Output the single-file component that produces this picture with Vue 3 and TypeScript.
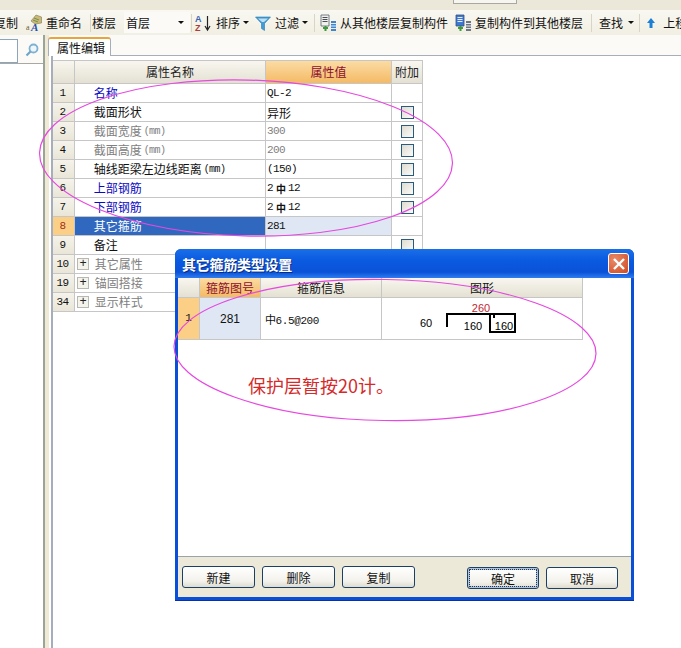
<template>
  <div class="page">
    <div class="topstrip"><span class="stub"></span></div>

    <div class="toolbar">
      <span class="tool cut">复制</span>
      <svg class="ico m8" width="16" height="18" viewBox="0 0 16 18">
        <path d="M5 7 L10 1 L15.5 3 L15.5 9 L9 10 Z" fill="#cdb877" stroke="#7d7a50" stroke-width=".6" />
        <path d="M8 4 L13 6 M7 6 L12 8" stroke="#6f8f52" />
        <text x="0" y="16" class="ico-a">a</text>
        <text x="5" y="17" class="ico-b">A</text>
      </svg>
      <span class="tool m4">重命名</span>
      <i class="sep m8"></i>
      <span class="tool m1">楼层</span>
      <span class="floor m8"><span>首层</span><b class="caret"></b></span>
      <i class="sep m1"></i>
      <svg class="ico m3" width="17" height="18" viewBox="0 0 17 18">
        <text x="0" y="8" class="az az-a">A</text>
        <text x="0" y="17" class="az az-z">Z</text>
        <path d="M12.5 2 V15 M10 12 L12.5 16 L15 12" stroke="#222" stroke-width="1.2" fill="none" />
      </svg>
      <span class="tool m4">排序</span>
      <b class="caret m3"></b>
      <svg class="ico m6" width="16" height="16" viewBox="0 0 16 16">
        <path d="M0.5 2 H15.5 L9.5 8.5 V15.5 L6.5 13.5 V8.5 Z" fill="#3f9cd8" stroke="#2a78ac" stroke-width=".6" />
        <path d="M3 3.5 H13 L9 7 H7 Z" fill="#bfe0f4" />
      </svg>
      <span class="tool m4">过滤</span>
      <b class="caret m3"></b>
      <i class="sep m6"></i>
      <svg class="ico m5" width="17" height="18" viewBox="0 0 17 18">
        <path d="M1 1 H9 V12 H1 Z" fill="#f2f2ec" stroke="#55606c" stroke-width=".8" />
        <path d="M2.5 3.5 H7.5 M2.5 5.5 H7.5 M2.5 7.5 H7.5" stroke="#4a5058" />
        <path d="M3 14 H8 M5.5 12 V17" stroke="#3f9a3f" stroke-width="2" />
        <path d="M11 7 H16 V17 H11 Z" fill="#3f86c8" />
        <path d="M11 9.5 H16 M11 12 H16 M11 14.5 H16" stroke="#e7edf6" />
      </svg>
      <span class="tool m3">从其他楼层复制构件</span>
      <svg class="ico m7" width="17" height="18" viewBox="0 0 17 18">
        <path d="M1 1 H9 V12 H1 Z" fill="#3f78d0" stroke="#34507f" stroke-width=".8" />
        <path d="M2.5 3.5 H7.5 M2.5 5.5 H7.5 M2.5 7.5 H7.5" stroke="#e7edf6" />
        <path d="M3 14 H8 M5.5 12 V17" stroke="#3f9a3f" stroke-width="2" />
        <path d="M11 7 H16 V17 H11 Z" fill="#70767e" />
        <path d="M11 9.5 H16 M11 12 H16 M11 14.5 H16" stroke="#e7edf6" />
      </svg>
      <span class="tool m3">复制构件到其他楼层</span>
      <i class="sep m8"></i>
      <span class="tool m7">查找</span>
      <b class="caret m5"></b>
      <i class="sep m5"></i>
      <svg class="ico m7" width="8" height="10" viewBox="0 0 8 10">
        <path d="M4 0 L8 5 H5.5 V10 H2.5 V5 H0 Z" fill="#1c7fd6" />
      </svg>
      <span class="tool m8">上移</span>
    </div>

    <div class="main">
      <aside class="side">
        <div class="search">
          <span class="search-input"></span>
          <svg class="search-ico" width="14" height="14" viewBox="0 0 14 14">
            <circle cx="8.5" cy="5.5" r="4" fill="#eef6fb" stroke="#7fb1d2" stroke-width="1.8" />
            <path d="M5.5 8.5 L1.5 12.5" stroke="#6ea4c8" stroke-width="2.2" />
          </svg>
        </div>
      </aside>
      <div class="splitter"></div>

      <section class="content">
        <div class="tabs"><span class="tab">属性编辑</span></div>
        <div class="panel">
          <div class="grid">
            <div class="hd"></div>
            <div class="hd">属性名称</div>
            <div class="hd hd-on">属性值</div>
            <div class="hd">附加</div>

            <template v-for="row in rows" :key="row.no">
              <div :class="['no', { 'no-on': row.active }]">{{ row.no }}</div>
              <div :class="['name', row.tone, { 'name-on': row.active, 'name-wide': row.group }]">
                <span v-if="row.group" class="plus">+</span>
                {{ row.name }}<small v-if="row.unit">(mm)</small>
              </div>
              <template v-if="!row.group">
                <div :class="['val', { 'val-on': row.active, 'val-gray': row.tone === 'gray', 'val-cn': row.cn }]">
                  <template v-if="row.bar"><span class="rebar">2</span><b class="bar">中</b><span class="rebar">12</span></template>
                  <template v-else>{{ row.value }}</template>
                </div>
                <div class="add"><span v-if="row.check" class="check"></span></div>
              </template>
            </template>
          </div>
          <svg class="ring" width="430" height="175" viewBox="0 0 430 175">
            <ellipse cx="208" cy="86" rx="206.5" ry="78" transform="rotate(1.5 208 86)" />
          </svg>
        </div>
      </section>
    </div>

    <div class="dialog">
      <div class="title">
        <span>其它箍筋类型设置</span>
        <span class="close">
          <svg width="14" height="14" viewBox="0 0 14 14">
            <path d="M2 2 L12 12 M12 2 L2 12" stroke="#fff" stroke-width="2.4" />
          </svg>
        </span>
      </div>
      <div class="client">
        <div class="list">
          <div class="lh"></div>
          <div class="lh lh-on">箍筋图号</div>
          <div class="lh">箍筋信息</div>
          <div class="lh">图形</div>
          <div class="ln">1</div>
          <div class="lc lc-on">281</div>
          <div class="lc lc-info">中6.5@200</div>
          <div class="lc lc-shape">
            <svg width="200" height="40" viewBox="0 0 200 40">
              <text x="99" y="13" class="dim dim-red">260</text>
              <text x="44" y="28" class="dim">60</text>
              <text x="91" y="31" class="dim">160</text>
              <text x="122" y="31" class="dim">160</text>
              <path d="M65 28 V15 H108 M108 15 H133 V33 H108 Z M112 15 V19" fill="none" stroke="#000" stroke-width="2" />
            </svg>
          </div>
        </div>
        <p class="note">保护层暂按20计。</p>
      </div>
      <div class="foot">
        <button class="btn">新建</button>
        <button class="btn">删除</button>
        <button class="btn">复制</button>
        <button class="btn btn-ok">确定</button>
        <button class="btn btn-cancel">取消</button>
      </div>
    </div>

    <svg class="ring ring-top" width="430" height="150" viewBox="0 0 430 150">
      <ellipse cx="213" cy="73" rx="211" ry="70.5" transform="rotate(1 213 73)" />
    </svg>
  </div>
</template>

<script setup lang="ts">
interface Row {
  no: number;
  name: string;
  value?: string;
  tone?: "blue" | "gray";
  unit?: boolean;
  check?: boolean;
  active?: boolean;
  group?: boolean;
  bar?: boolean;
  cn?: boolean;
}

const rows: Row[] = [
  { no: 1, name: "名称", value: "QL-2", tone: "blue" },
  { no: 2, name: "截面形状", value: "异形", check: true, cn: true },
  { no: 3, name: "截面宽度", value: "300", tone: "gray", unit: true, check: true },
  { no: 4, name: "截面高度", value: "200", tone: "gray", unit: true, check: true },
  { no: 5, name: "轴线距梁左边线距离", value: "(150)", unit: true, check: true },
  { no: 6, name: "上部钢筋", tone: "blue", bar: true, check: true },
  { no: 7, name: "下部钢筋", tone: "blue", bar: true, check: true },
  { no: 8, name: "其它箍筋", value: "281", active: true },
  { no: 9, name: "备注", value: "", check: true },
  { no: 10, name: "其它属性", tone: "gray", group: true },
  { no: 19, name: "锚固搭接", tone: "gray", group: true },
  { no: 34, name: "显示样式", tone: "gray", group: true },
];
</script>

<style>
html,
body {
  margin: 0;
  background: #fff;
}
</style>

<style scoped>
.page {
  position: relative;
  width: 681px;
  height: 648px;
  overflow: hidden;
  display: flex;
  flex-direction: column;
  background: #fff;
  color: #111;
  font: 12px/1 "Noto Sans CJK SC", "Liberation Sans", sans-serif;
}

.topstrip {
  height: 10px;
  background: #ebe8da;
  flex: none;
}

.stub {
  display: block;
  width: 62px;
  height: 3px;
  margin-left: 453px;
  border: 1px solid #a8a8a0;
  border-top: none;
  background: #f6f5ef;
}

.toolbar {
  height: 25px;
  flex: none;
  display: flex;
  align-items: center;
  white-space: nowrap;
  background: linear-gradient(#f9f8f1, #f1efe3);
}

.tool {
  flex: none;
}

.cut {
  margin-left: -6px;
}

.ico {
  flex: none;
  overflow: visible;
}

.ico-a {
  font: 8px "Liberation Serif", serif;
  fill: #6a5a30;
}

.ico-b {
  font: italic bold 11px "Liberation Serif", serif;
  fill: #2a4fa8;
}

.az {
  font: bold 9px "Liberation Sans", sans-serif;
}

.az-a {
  fill: #3a62b0;
}

.az-z {
  fill: #a8403a;
}

.m1 { margin-left: 1px; }
.m3 { margin-left: 3px; }
.m4 { margin-left: 4px; }
.m5 { margin-left: 5px; }
.m6 { margin-left: 6px; }
.m7 { margin-left: 7px; }
.m8 { margin-left: 8px; }

.sep {
  flex: none;
  width: 1px;
  height: 18px;
  background: #d8d5c6;
}

.caret {
  flex: none;
  width: 0;
  height: 0;
  border: 3px solid transparent;
  border-top: 3px solid #111;
  border-bottom: none;
}

.floor {
  flex: none;
  width: 66px;
  height: 21px;
  box-sizing: border-box;
  padding: 0 6px 0 2px;
  display: flex;
  align-items: center;
  justify-content: space-between;
  background: #fbfaf6;
}

.main {
  flex: 1;
  min-height: 0;
  display: flex;
}

.side {
  width: 43px;
  flex: none;
  background: #fff;
}

.search {
  height: 29px;
  box-sizing: border-box;
  display: flex;
  padding-top: 4px;
  border-bottom: 1px solid #a9a9a4;
  background: #fbfaf6;
}

.search-input {
  width: 18px;
  height: 24px;
  box-sizing: border-box;
  background: #fff;
  border: 1px solid #8ea4bc;
  border-left: none;
}

.search-ico {
  margin: 4px 0 0 7px;
}

.splitter {
  width: 6px;
  flex: none;
  box-sizing: border-box;
  background: #efe9d5;
  border-left: 2px solid #9aa59a;
}

.content {
  flex: 1;
  min-width: 0;
  display: flex;
  flex-direction: column;
}

.tabs {
  height: 20px;
  flex: none;
  display: flex;
  align-items: flex-end;
  background: #fbfaf6;
  border-bottom: 1px solid #a6aebb;
}

.tab {
  position: relative;
  top: 1px;
  width: 63px;
  height: 19px;
  box-sizing: border-box;
  margin-left: -1px;
  padding: 3px 0 0 8px;
  background: #fff;
  border: 1px solid #a6aebb;
  border-top: 2px solid #e8a53c;
  border-bottom: none;
  border-radius: 3px 3px 0 0;
}

.panel {
  position: relative;
  flex: 1;
  margin-left: 2px;
  padding: 4px 0 0 0;
  border-left: 2px solid #a6aebb;
}

.grid {
  display: grid;
  width: 370px;
  grid-template-columns: 22px 191px 126px 31px;
  grid-template-rows: 23px repeat(12, 19px);
  border-top: 1px solid #c6c6c6;
}

.grid > div {
  box-sizing: border-box;
  display: flex;
  align-items: center;
  border-right: 1px solid #c6c6c6;
  border-bottom: 1px solid #c6c6c6;
}

.hd {
  justify-content: center;
  background: linear-gradient(#f8f6ef, #e4e1d3);
  color: #222;
}

.hd-on {
  background: linear-gradient(#fbdca4, #f4ba65);
  color: #8c0f2e;
}

.no {
  justify-content: center;
  padding-right: 2px;
  background: linear-gradient(#f5f3ea, #e9e6d8);
  font-family: "Liberation Mono", monospace;
  font-size: 11px;
  letter-spacing: -0.6px;
}

.no-on {
  background: #fbcf85;
  color: #a2301c;
}

.name {
  padding-left: 16px;
  white-space: pre;
}

.name small {
  margin-left: 2px;
  font: 10px "Liberation Mono", monospace;
  letter-spacing: -0.6px;
}

.name-on {
  background: #3168bf;
  color: #fff;
}

.name-wide {
  grid-column: span 3;
  padding-left: 2px;
}

.blue {
  color: #0a0ac4;
}

.gray {
  color: #808080;
}

.plus {
  width: 12px;
  height: 12px;
  box-sizing: border-box;
  margin-right: 3px;
  display: flex;
  align-items: center;
  justify-content: center;
  background: #f4f3ec;
  border: 1px solid #b8b8b0;
  color: #222;
  font: 12px/1 "Liberation Mono", monospace;
}

.val {
  padding-left: 1px;
  font: 11px "Liberation Mono", monospace;
  letter-spacing: -0.6px;
}

.val-cn {
  font: 12px "Noto Sans CJK SC", sans-serif;
  letter-spacing: 0;
}

.val-gray {
  color: #808080;
}

.val-on {
  background: #dfe7f4;
}

.rebar {
  font-size: 11px;
}

.bar {
  margin: 0 2px 0 3px;
  font: bold 10px "Noto Sans CJK SC", sans-serif;
  letter-spacing: 0;
}

.add {
  justify-content: center;
}

.check {
  width: 13px;
  height: 13px;
  box-sizing: border-box;
  border: 1px solid #2a5a7c;
  background: linear-gradient(135deg, #dedbd0, #fbfbf8);
}

.ring {
  position: absolute;
  overflow: visible;
  top: 16px;
  left: -15px;
  pointer-events: none;
}

.ring ellipse {
  fill: none;
  stroke: #e648e0;
  stroke-width: 1.2;
}

.ring-top {
  top: 277px;
  left: 172px;
}

.dialog {
  position: absolute;
  top: 249px;
  left: 175px;
  width: 459px;
  height: 352px;
  box-sizing: border-box;
  display: flex;
  flex-direction: column;
  padding: 0 3px 3px;
  background: #0a4fd8;
  border-radius: 6px 6px 0 0;
  border-bottom: 1px solid #0831a8;
}

.title {
  height: 29px;
  flex: none;
  margin: 0 -3px;
  padding: 0 5px 0 7px;
  display: flex;
  align-items: center;
  justify-content: space-between;
  border-radius: 6px 6px 0 0;
  background: linear-gradient(#1a6fe8, #0a5ae0 40%, #0a52d8 80%, #2f7df0);
  color: #fff;
  font-size: 14px;
  font-weight: 700;
  letter-spacing: -0.25px;
  text-shadow: 1px 1px 0 #0a2c80;
}

.close {
  width: 21px;
  height: 21px;
  box-sizing: border-box;
  display: flex;
  align-items: center;
  justify-content: center;
  border: 1px solid #fff;
  border-radius: 3px;
  background: radial-gradient(circle at 30% 30%, #e88a68, #cf4a22);
}

.client {
  flex: 1;
  min-height: 0;
  background: #fff;
  border-bottom: 1px solid #9aa4a8;
}

.list {
  display: grid;
  width: 405px;
  grid-template-columns: 22px 61px 121px 201px;
  grid-template-rows: 20px 42px;
}

.list > div {
  box-sizing: border-box;
  display: flex;
  align-items: center;
  justify-content: center;
  border-right: 1px solid #c6c6c6;
  border-bottom: 1px solid #c6c6c6;
}

.lh {
  background: linear-gradient(#f8f6ef, #e4e1d3);
}

.lh-on {
  background: linear-gradient(#fbdca4, #f4ba65);
  color: #8c0f2e;
}

.ln {
  background: #fbcf85;
  font-family: "Liberation Mono", monospace;
  font-size: 11px;
}

.lc {
  font-family: "Liberation Sans", sans-serif;
}

.lc-on {
  background: #dfe7f4;
}

.list > .lc-info {
  justify-content: flex-start;
  padding-left: 4px;
  font: 11px "Liberation Mono", "Noto Sans CJK SC", monospace;
  letter-spacing: -0.4px;
}

.dim {
  font: 11px "Liberation Sans", sans-serif;
  text-anchor: middle;
}

.dim-red {
  fill: #c41e30;
}

.note {
  margin: 36px 0 0 70px;
  color: #d42a2a;
  font-size: 18px;
  line-height: 1;
}

.foot {
  height: 40px;
  flex: none;
  box-sizing: border-box;
  padding: 9px 0 0 4px;
  display: flex;
  align-items: flex-start;
  gap: 7px;
  background: #ece9d8;
}

.btn {
  width: 73px;
  height: 22px;
  padding: 0;
  border: 1px solid #1c3f66;
  border-radius: 3px;
  background: linear-gradient(#fff, #f3f2ec 70%, #dedcd0);
  color: #111;
  font: 12px "Noto Sans CJK SC", sans-serif;
}

.btn-ok {
  width: 72px;
  margin: 1px 0 0 45px;
  outline: 1px dotted #333;
  outline-offset: -3px;
  box-shadow: inset 0 0 0 2px #a9c4e8;
}

.btn-cancel {
  width: 72px;
  margin-top: 1px;
}
</style>
